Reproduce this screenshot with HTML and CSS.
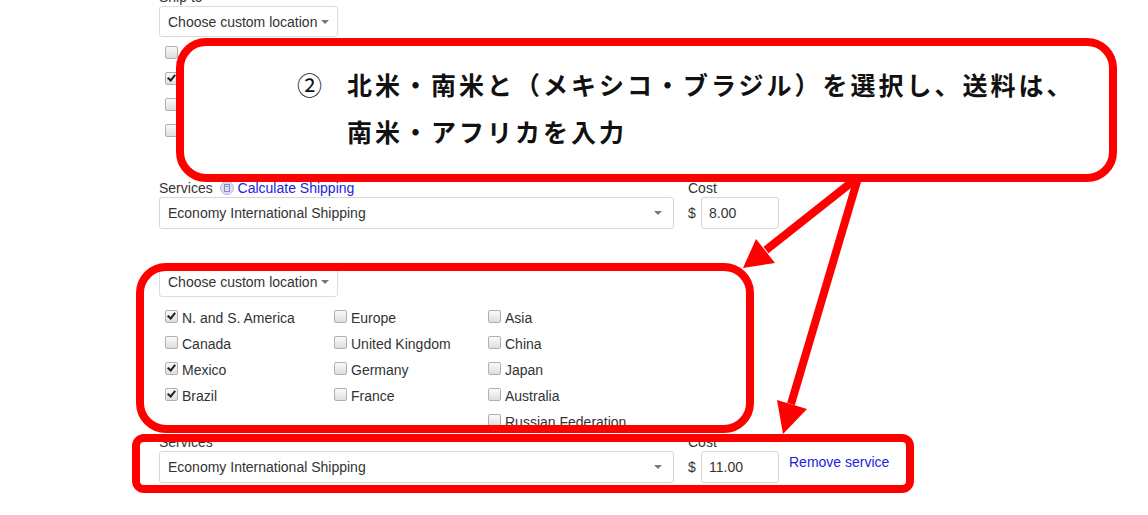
FILE: index.html
```html
<!DOCTYPE html>
<html lang="ja">
<head>
  <meta charset="UTF-8">
  <meta name="viewport" content="width=device-width, initial-scale=1.0">
  <title>International shipping</title>
  <link rel="stylesheet" href="styles.css">
</head>
<body>
  <form class="ship-form">
    <!-- first service -->
    <div class="ship-block">
      <div class="field-label">Ship to</div>
      <button type="button" class="loc-btn">Choose custom location<span class="caret"></span></button>
      <div class="loc-grid">
        <div class="loc-col">
          <label class="loc"><span class="cb"></span>N. and S. America</label>
          <label class="loc"><span class="cb on"></span>Canada</label>
          <label class="loc"><span class="cb"></span>Mexico</label>
          <label class="loc"><span class="cb"></span>Brazil</label>
        </div>
        <div class="loc-col col-mid">
          <label class="loc"><span class="cb"></span>Europe</label>
          <label class="loc"><span class="cb"></span>United Kingdom</label>
          <label class="loc"><span class="cb"></span>Germany</label>
          <label class="loc"><span class="cb"></span>France</label>
        </div>
        <div class="loc-col">
          <label class="loc"><span class="cb"></span>Asia</label>
          <label class="loc"><span class="cb"></span>China</label>
          <label class="loc"><span class="cb"></span>Japan</label>
          <label class="loc"><span class="cb"></span>Australia</label>
          <label class="loc last"><span class="cb"></span>Russian Federation</label>
        </div>
      </div>
      <div class="svc first">
        <div class="svc-main">
          <div class="field-label">Services
            <a class="calc-link" href="#">
              <svg class="calc-icon" width="14" height="14" viewBox="0 0 14 14">
                <circle cx="7" cy="7" r="6.5" fill="#dcdcf6" stroke="#b8b8e8"/>
                <rect x="4.5" y="3.5" width="5" height="7" fill="none" stroke="#8c8cc8"/>
                <line x1="5.5" y1="5.5" x2="8.5" y2="5.5" stroke="#8c8cc8"/>
              </svg>Calculate Shipping</a>
          </div>
          <div class="select"><span>Economy International Shipping</span><span class="caret"></span></div>
        </div>
        <div class="svc-cost">
          <div class="field-label">Cost</div>
          <div class="cost-field"><span class="cur">$</span><input class="cost" type="text" value="8.00"></div>
        </div>
      </div>
    </div>

    <!-- second service -->
    <div class="ship-block second">
      <button type="button" class="loc-btn">Choose custom location<span class="caret"></span></button>
      <div class="loc-grid">
        <div class="loc-col">
          <label class="loc"><span class="cb on"></span>N. and S. America</label>
          <label class="loc"><span class="cb"></span>Canada</label>
          <label class="loc"><span class="cb on"></span>Mexico</label>
          <label class="loc"><span class="cb on"></span>Brazil</label>
        </div>
        <div class="loc-col col-mid">
          <label class="loc"><span class="cb"></span>Europe</label>
          <label class="loc"><span class="cb"></span>United Kingdom</label>
          <label class="loc"><span class="cb"></span>Germany</label>
          <label class="loc"><span class="cb"></span>France</label>
        </div>
        <div class="loc-col">
          <label class="loc"><span class="cb"></span>Asia</label>
          <label class="loc"><span class="cb"></span>China</label>
          <label class="loc"><span class="cb"></span>Japan</label>
          <label class="loc"><span class="cb"></span>Australia</label>
          <label class="loc last"><span class="cb"></span>Russian Federation</label>
        </div>
      </div>
      <div class="svc">
        <div class="svc-main">
          <div class="field-label">Services</div>
          <div class="select"><span>Economy International Shipping</span><span class="caret"></span></div>
        </div>
        <div class="svc-cost">
          <div class="field-label">Cost</div>
          <div class="cost-field"><span class="cur">$</span><input class="cost" type="text" value="11.00"></div>
        </div>
        <a class="remove-link" href="#">Remove service</a>
      </div>
    </div>
  </form>

  <!-- annotations -->
  <div class="note">
    <span class="note-num">②</span>
    <p class="note-text">北米・南米と（メキシコ・ブラジル）を選択し、送料は、<br>南米・アフリカを入力</p>
  </div>
  <div class="mark mark-locations"></div>
  <div class="mark mark-cost"></div>
  <svg class="arrows" width="1148" height="515" viewBox="0 0 1148 515">
    <line x1="857" y1="178" x2="766" y2="250" stroke="#ff0000" stroke-width="8"/>
    <polygon points="743,268 756,239 775,263" fill="#ff0000"/>
    <line x1="858" y1="178" x2="791" y2="404" stroke="#ff0000" stroke-width="8"/>
    <polygon points="783,434 777,400 807,409" fill="#ff0000"/>
  </svg>
</body>
</html>
```

FILE: styles.css
```css
body {
  margin: 0;
  font-family: "Liberation Sans", Arial, sans-serif;
  font-size: 14px;
  color: #333;
  background: #fff;
  overflow: hidden;
}

.ship-form {
  margin: -11px 0 0 159px;
}
.field-label {
  line-height: 16px;
  margin-bottom: 1px;
  white-space: nowrap;
}

.loc-btn {
  display: flex;
  align-items: center;
  height: 31px;
  padding: 0 8px;
  border: 1px solid #dcdcdc;
  border-radius: 3px;
  background: #fff;
  font: inherit;
  color: #333;
}
.caret {
  display: inline-block;
  width: 0;
  height: 0;
  margin-left: 4px;
  border-left: 4px solid transparent;
  border-right: 4px solid transparent;
  border-top: 4px solid #777;
}

.loc-grid {
  display: flex;
  margin: 9px 0 0 6px;
}
.second .loc-grid {
  margin-top: 13px;
}
.loc-col {
  width: 169px;
}
.loc-col.col-mid {
  width: 154px;
}
.loc {
  display: flex;
  align-items: flex-start;
  height: 26px;
  line-height: 16px;
  white-space: nowrap;
}
.loc.last {
  height: 16px;
}
.cb {
  position: relative;
  flex: none;
  width: 11px;
  height: 11px;
  margin: 0 4px 0 0;
  border: 1px solid #b0b0b0;
  border-radius: 2px;
  background: linear-gradient(#fafafa, #dedede);
}
.cb.on::after {
  content: "";
  position: absolute;
  left: 3px;
  top: 0;
  width: 3px;
  height: 6px;
  border: solid #222;
  border-width: 0 2px 2px 0;
  transform: rotate(40deg);
}

.svc {
  display: flex;
  align-items: flex-start;
  margin-top: 4px;
}
.svc.first {
  margin-top: 14px;
}
.svc-main {
  width: 515px;
  margin-right: 14px;
}
.calc-link {
  color: #2222dd;
  text-decoration: none;
  margin-left: 3px;
}
.calc-icon {
  vertical-align: -2px;
  margin-right: 4px;
}
.select {
  display: flex;
  align-items: center;
  justify-content: space-between;
  height: 30px;
  padding: 0 11px 0 8px;
  border: 1px solid #d6d6d6;
  border-radius: 3px;
  background: #fff;
}
.cost-field {
  display: flex;
  align-items: center;
}
.cur {
  width: 13px;
}
.cost {
  box-sizing: border-box;
  width: 78px;
  height: 32px;
  padding: 0 7px;
  border: 1px solid #d6d6d6;
  border-radius: 3px;
  font: inherit;
  color: #333;
}
.remove-link {
  margin: 20px 0 0 10px;
  line-height: 16px;
  color: #2222dd;
  text-decoration: none;
  white-space: nowrap;
}

.second {
  margin-top: 37px;
}

/* red annotations on top of the form */
.note {
  position: absolute;
  left: 176px;
  top: 38px;
  box-sizing: border-box;
  width: 941px;
  height: 144px;
  display: flex;
  padding: 15px 0 0 113px;
  border: 8px solid #ff0000;
  border-radius: 30px;
  background: #fff;
  font-family: "Noto Sans CJK JP", sans-serif;
  font-size: 25px;
  line-height: 47px;
  color: #111;
}
.note-num {
  flex: none;
  width: 50px;
}
.note-text {
  margin: 0;
  font-weight: bold;
  letter-spacing: 3px;
}
.mark {
  position: absolute;
  box-sizing: border-box;
  border: 8px solid #ff0000;
}
.mark-locations {
  left: 136px;
  top: 263px;
  width: 618px;
  height: 170px;
  border-radius: 30px;
}
.mark-cost {
  left: 132px;
  top: 434px;
  width: 782px;
  height: 59px;
  border-radius: 12px;
}
.arrows {
  position: absolute;
  left: 0;
  top: 0;
  pointer-events: none;
}
```
